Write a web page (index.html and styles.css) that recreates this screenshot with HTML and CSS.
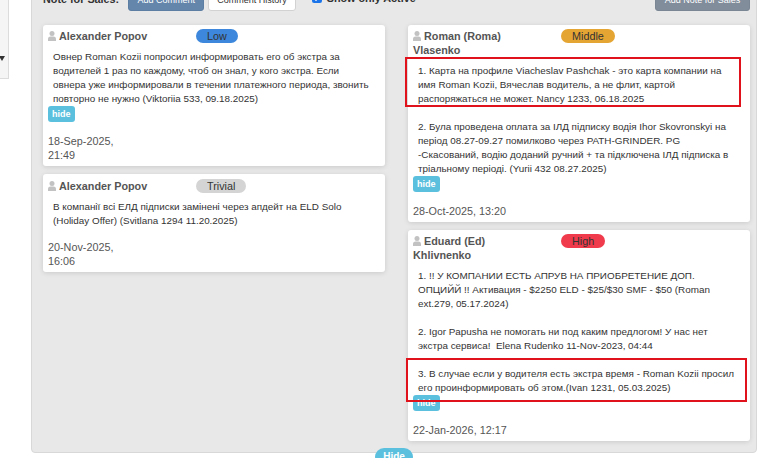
FILE: index.html
```html
<!DOCTYPE html>
<html lang="ru">
<head>
<meta charset="utf-8">
<title>Notes for Sales</title>
<link rel="stylesheet" href="styles.css">
</head>
<body>
<div class="page">
  <aside class="side"><span class="caret"></span></aside>
  <main class="wrap">
    <section class="panel">
      <div class="toolbar">
        <span class="tb-label">Note for Sales:</span>
        <button class="btn btn-primary">Add Comment</button>
        <button class="btn btn-default">Comment History</button>
        <label class="chk"><input type="checkbox" checked> Show only Active</label>
        <button class="btn btn-gray">Add Note for Sales</button>
      </div>
      <div class="cols">
        <div class="col col-left">
          <article class="card">
            <header class="card-head">
              <span class="name"><svg class="user" viewBox="0 0 8 10"><circle cx="4" cy="2.6" r="2.5"/><path d="M0 10V8.2Q0 5.6 2.6 5.6H5.4Q8 5.6 8 8.2V10Z"/></svg>Alexander Popov</span>
              <span class="badge badge-low">Low</span>
            </header>
            <div class="body">
              <p class="note">Овнер Roman Kozii попросил информировать его об экстра за водителей 1 раз по каждому, чтоб он знал, у кого экстра. Если овнера уже информировали в течении платежного периода, звонить повторно не нужно (Viktoriia 533, 09.18.2025)</p>
            </div>
            <button class="hide">hide</button>
            <div class="date">18-Sep-2025,<br>21:49</div>
          </article>
          <article class="card">
            <header class="card-head card-head-loose">
              <span class="name"><svg class="user" viewBox="0 0 8 10"><circle cx="4" cy="2.6" r="2.5"/><path d="M0 10V8.2Q0 5.6 2.6 5.6H5.4Q8 5.6 8 8.2V10Z"/></svg>Alexander Popov</span>
              <span class="badge badge-trivial">Trivial</span>
            </header>
            <div class="body">
              <p class="note">В компанії всі ЕЛД підписки замінені через апдейт на ELD Solo (Holiday Offer) (Svitlana 1294 11.20.2025)</p>
            </div>
            <div class="date">20-Nov-2025,<br>16:06</div>
          </article>
        </div>
        <div class="col">
          <article class="card">
            <header class="card-head">
              <span class="name"><svg class="user" viewBox="0 0 8 10"><circle cx="4" cy="2.6" r="2.5"/><path d="M0 10V8.2Q0 5.6 2.6 5.6H5.4Q8 5.6 8 8.2V10Z"/></svg>Roman (Roma) Vlasenko</span>
              <span class="badge badge-middle">Middle</span>
            </header>
            <div class="body">
              <p class="note">1. Карта на профиле Viacheslav Pashchak - это карта компании на имя Roman Kozii, Вячеслав водитель, а не флит, картой распоряжаться не может. Nancy 1233, 06.18.2025<span class="mark mark-a"></span></p>
              <p class="note">2. Була проведена оплата за ІЛД підписку водія Ihor Skovronskyi на період 08.27-09.27 помилково через PATH-GRINDER. PG -Скасований, водію доданий ручний + та підключена ІЛД підписка в тріальному періоді. (Yurii 432 08.27.2025)</p>
            </div>
            <button class="hide">hide</button>
            <div class="date">28-Oct-2025, 13:20</div>
          </article>
          <article class="card">
            <header class="card-head">
              <span class="name"><svg class="user" viewBox="0 0 8 10"><circle cx="4" cy="2.6" r="2.5"/><path d="M0 10V8.2Q0 5.6 2.6 5.6H5.4Q8 5.6 8 8.2V10Z"/></svg>Eduard (Ed) Khlivnenko</span>
              <span class="badge badge-high">High</span>
            </header>
            <div class="body">
              <p class="note">1. !! У КОМПАНИИ ЕСТЬ АПРУВ НА ПРИОБРЕТЕНИЕ ДОП. ОПЦИЙЙ !! Активация - $2250 ELD - $25/$30 SMF - $50 (Roman ext.279, 05.17.2024)</p>
              <p class="note">2. Igor Papusha не помогать ни под каким предлогом! У нас нет экстра сервиса!&nbsp; Elena Rudenko 11-Nov-2023, 04:44</p>
              <p class="note">3. В случае если у водителя есть экстра время - Roman Kozii просил его проинформировать об этом.(Ivan 1231, 05.03.2025)<span class="mark mark-b"></span></p>
            </div>
            <button class="hide">hide</button>
            <div class="date">22-Jan-2026, 12:17</div>
          </article>
        </div>
      </div>
    </section>
    <div class="hide-row"><button class="hide-all">Hide</button></div>
  </main>
</div>
</body>
</html>
```

FILE: styles.css
```css
* { box-sizing: border-box; }
html, body { margin: 0; padding: 0; background: #fff; overflow: hidden; }
body { font-family: "Liberation Sans", Arial, sans-serif; color: #333; }

.page { display: flex; align-items: flex-start; margin-top: -20px; }

.side {
  position: relative;
  width: 9px;
  height: 99px;
  background: #f5f5f5;
  border-right: 1px solid #dcdcdc;
  border-bottom: 1px solid #dcdcdc;
  flex: none;
}
.caret {
  position: absolute;
  left: -1px;
  top: 76px;
  width: 0; height: 0;
  border-left: 3px solid transparent;
  border-right: 3px solid transparent;
  border-top: 5px solid #333;
}

.wrap { margin-left: 22px; width: 726px; flex: none; }

.panel {
  background: #e8e8e8;
  border: 1px solid #d8d8d8;
  border-radius: 4px;
  padding: 8px 6px 11px 11px;
}

.toolbar { display: flex; align-items: center; height: 22px; }
.tb-label { font-weight: bold; font-size: 10.8px; color: #333; margin-right: 9px; position: relative; top: -1px; white-space: nowrap; }
.btn {
  height: 22px;
  font-family: inherit;
  font-size: 9px;
  padding: 0 8px;
  border-radius: 3px;
  border: 1px solid transparent;
  cursor: pointer;
  line-height: 20px;
  white-space: nowrap;
  flex: none;
}
.btn-primary { background: #6486ab; color: #fff; border-color: #5d7ea3; min-width: 76px; }
.btn-default { background: #fff; color: #333; border-color: #d2d2d2; margin-left: 4px; min-width: 86px; }
.btn-gray { background: #818d9b; color: #fff; border-color: #7a8694; margin-left: auto; min-width: 95px; }
.chk { display: flex; align-items: center; margin-left: 16px; font-weight: bold; font-size: 10.8px; color: #333; position: relative; top: -2px; white-space: nowrap; }
.chk input { width: 10px; height: 10px; margin: 0 5px 0 0; accent-color: #1a73e8; }

.cols { display: grid; grid-template-columns: 342px 342px; column-gap: 23px; margin-top: 14px; }
.col { display: flex; flex-direction: column; gap: 8px; }

.card {
  background: #fff;
  border-radius: 3px;
  box-shadow: 0 1px 5px rgba(0, 0, 0, 0.13);
  padding: 4px 5px 4px 5px;
}
.card-head { display: flex; align-items: flex-start; }
.card-head-loose { padding-top: 1px; }
.name {
  width: 120px;
  margin-right: 28px;
  font-weight: bold;
  font-size: 10.8px;
  line-height: 14px;
  color: #555;
}
.user { width: 8px; height: 10px; fill: #c2c2c2; margin-right: 3px; vertical-align: -1px; }
.badge {
  display: inline-block;
  height: 14px;
  line-height: 14px;
  padding: 0 11px;
  border-radius: 7px;
  font-size: 10.8px;
  color: #333;
}
.badge-low { background: #3d88dc; }
.badge-trivial { background: #d4d4d4; }
.badge-middle { background: #e5a533; }
.badge-high { background: #ef3b4b; }

.body { margin: 7px 5px 0 5px; font-size: 9.9px; line-height: 14px; color: #333; }
.col-left .body { margin-right: 9px; }
.note { margin: 0 0 14px; position: relative; }
.note:last-child { margin-bottom: 0; }

.mark { position: absolute; border: 2px solid #e0121c; pointer-events: none; }
.mark-a { top: -7px; bottom: -1px; left: -13px; right: -1px; }
.mark-b { top: -9px; bottom: -7px; left: -12px; right: -7px; z-index: 2; }

.hide {
  display: block;
  height: 16px;
  padding: 0 4px;
  border: none;
  border-radius: 3px;
  background: #5bc0de;
  color: #fff;
  font-family: inherit;
  font-weight: bold;
  font-size: 9px;
  line-height: 16px;
}

.date { margin-top: 12px; font-size: 10.8px; line-height: 14px; color: #555; }

.hide-row { display: flex; justify-content: center; margin-top: -5px; }
.hide-all {
  height: 18px;
  padding: 0 8px;
  border: none;
  border-radius: 9px;
  background: #5bc0de;
  color: #fff;
  font-family: inherit;
  font-weight: bold;
  font-size: 10px;
  line-height: 18px;
}
```
